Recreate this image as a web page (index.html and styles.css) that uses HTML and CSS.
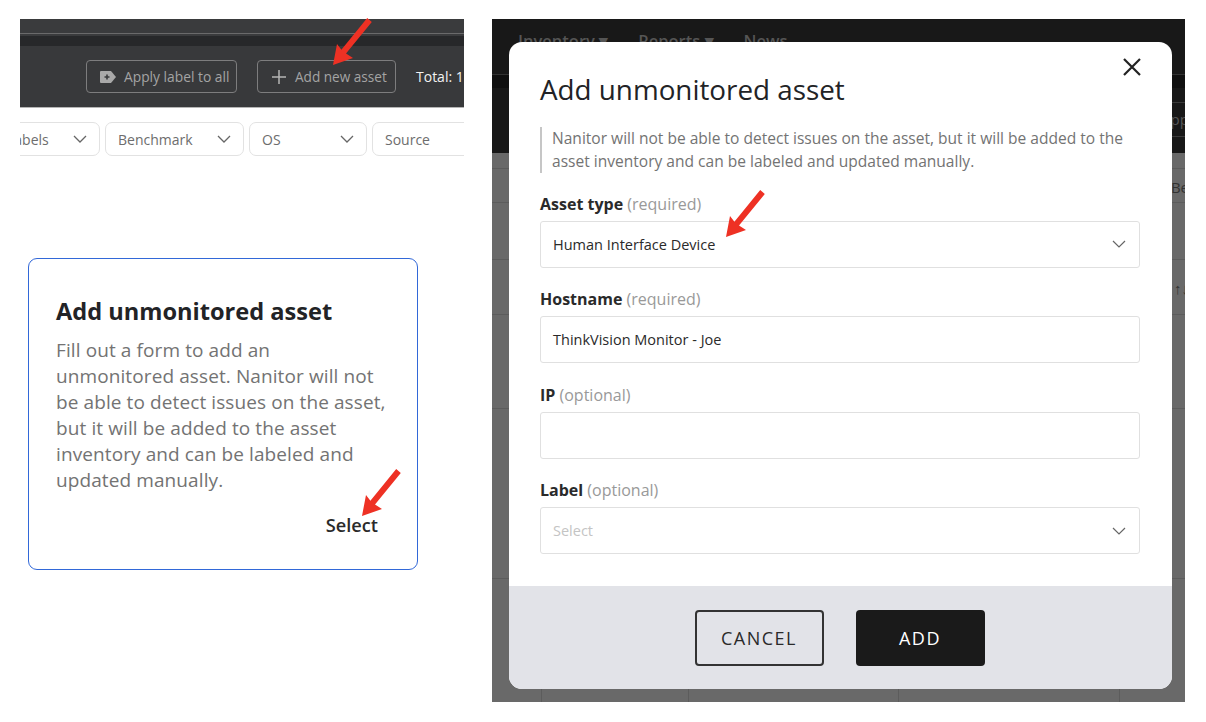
FILE: index.html
```html
<!DOCTYPE html>
<html lang="en">
<head>
  <meta charset="UTF-8">
  <title>Add unmonitored asset</title>
  <link rel="stylesheet" href="styles.css">
</head>
<body>
  <div class="page">
    <div class="left-col">
      <div class="shot-top">
        <div class="bar-strip"></div>
        <div class="bar-dark"></div>
        <div class="toolbar">
          <div class="tool-btn tool-btn-label">
            <svg width="18" height="14" viewBox="0 0 18 14"><path d="M2 1h10l5 6-5 6H2a1 1 0 0 1-1-1V2a1 1 0 0 1 1-1z" fill="#a9a9a9"/><path d="M5.5 7h5M8 4.5v5" stroke="#3a3b3d" stroke-width="1.6"/></svg>
            <span>Apply label to all</span>
          </div>
          <div class="tool-btn tool-btn-add">
            <svg width="14" height="14" viewBox="0 0 14 14"><path d="M7 0v14M0 7h14" stroke="#b5b5b5" stroke-width="1.5"/></svg>
            <span>Add new asset</span>
          </div>
          <span class="total">Total: 1</span>
        </div>
        <div class="filters">
          <div class="filter filter-labels"><span>Labels</span><svg class="chev" width="14" height="8" viewBox="0 0 14 8"><path d="M1 1l6 6 6-6" fill="none" stroke="#666" stroke-width="1.3"/></svg></div>
          <div class="filter filter-bench"><span>Benchmark</span><svg class="chev" width="14" height="8" viewBox="0 0 14 8"><path d="M1 1l6 6 6-6" fill="none" stroke="#666" stroke-width="1.3"/></svg></div>
          <div class="filter filter-os"><span>OS</span><svg class="chev" width="14" height="8" viewBox="0 0 14 8"><path d="M1 1l6 6 6-6" fill="none" stroke="#666" stroke-width="1.3"/></svg></div>
          <div class="filter filter-source"><span>Source</span></div>
        </div>
      </div>

      <div class="card">
        <h3>Add unmonitored asset</h3>
        <p>Fill out a form to add an unmonitored asset. Nanitor will not be able to detect issues on the asset, but it will be added to the asset inventory and can be labeled and updated manually.</p>
        <div class="card-select">Select</div>
      </div>
    </div>

    <div class="shot-right">
      <div class="bg-nav">
        <span>Inventory ▾</span>
        <span>Reports ▾</span>
        <span>News</span>
      </div>
      <div class="bg-sub"></div>
      <div class="bg-bar"><span>Apply</span></div>
      <div class="bg-row bg-row-a"></div>
      <div class="bg-row bg-row-b"><span>Be</span></div>
      <div class="bg-row bg-row-c"></div>
      <div class="bg-row bg-row-d"><span>↑↓</span></div>
      <div class="bg-row bg-row-e"></div>
      <div class="bg-row bg-row-f"></div>
      <div class="bg-cols">
        <i></i><i></i><i></i><i></i>
      </div>

      <div class="modal">
        <svg class="close" width="18" height="18" viewBox="0 0 18 18"><path d="M1 1l16 16M17 1L1 17" stroke="#222" stroke-width="2.2"/></svg>
        <div class="modal-body">
          <h2>Add unmonitored asset</h2>
          <p class="note">Nanitor will not be able to detect issues on the asset, but it will be added to the asset inventory and can be labeled and updated manually.</p>

          <div class="field field-type">
            <label><b>Asset type</b> (required)</label>
            <div class="box">
              <span>Human Interface Device</span>
              <svg width="14" height="8" viewBox="0 0 14 8"><path d="M1 1l6 6 6-6" fill="none" stroke="#666" stroke-width="1.2"/></svg>
            </div>
          </div>
          <div class="field">
            <label><b>Hostname</b> (required)</label>
            <div class="box"><span>ThinkVision Monitor - Joe</span></div>
          </div>
          <div class="field">
            <label><b>IP</b> (optional)</label>
            <div class="box"></div>
          </div>
          <div class="field">
            <label><b>Label</b> (optional)</label>
            <div class="box">
              <span class="placeholder">Select</span>
              <svg width="14" height="8" viewBox="0 0 14 8"><path d="M1 1l6 6 6-6" fill="none" stroke="#666" stroke-width="1.2"/></svg>
            </div>
          </div>
        </div>
        <div class="modal-foot">
          <button class="btn btn-cancel">CANCEL</button>
          <button class="btn btn-add">ADD</button>
        </div>
      </div>
    </div>

    <!-- red arrows drawn over the screenshots -->
    <svg class="arrow arrow-1" width="41" height="52" viewBox="0 0 41 52"><polygon points="1,51 5,30 9.4,35.8 35.2,4 39.8,8 14,39.6 21,44"/></svg>
    <svg class="arrow arrow-2" width="41" height="52" viewBox="0 0 41 52"><polygon points="1,51 5,30 9.4,35.8 35.2,4 39.8,8 14,39.6 21,44"/></svg>
    <svg class="arrow arrow-3" width="41" height="52" viewBox="0 0 41 52"><polygon points="1,51 5,30 9.4,35.8 35.2,4 39.8,8 14,39.6 21,44"/></svg>
  </div>
</body>
</html>
```

FILE: styles.css
```css
html, body {
  margin: 0;
  background-color: #fff;
}

body {
  font-family: "Open Sans", "Noto Sans", sans-serif;
  overflow: hidden;
}

.page {
  position: relative;
  width: 1206px;
  height: 722px;
  padding: 19px 21px 20px 20px;
  box-sizing: border-box;
  display: flex;
  gap: 28px;
}

.left-col {
  width: 444px;
  display: flex;
  flex-direction: column;
}

/* top left screenshot */
.shot-top {
  height: 146px;
  overflow: hidden;
}

.bar-strip {
  height: 14px;
  background-color: #3a3b3d;
  border-bottom: 1px solid #6a6a6b;
}

.bar-dark {
  height: 10px;
  background-color: #27282a;
  border-top: 2px solid #3a3b3d;
}

.toolbar {
  height: 62px;
  padding: 14px 0 0 66px;
  box-sizing: border-box;
  background-color: #38393b;
  border-bottom: 1px solid #b5b5b5;
  display: flex;
  align-items: flex-start;
  white-space: nowrap;
}

.tool-btn {
  height: 33px;
  box-sizing: border-box;
  flex-shrink: 0;
  border: 1px solid #7d7d7e;
  border-radius: 4px;
  display: flex;
  align-items: center;
  color: #a4a4a4;
}

.tool-btn-label {
  width: 151px;
  padding-left: 12px;
  gap: 7px;
  font-size: 13.8px;
}

.tool-btn-add {
  width: 139px;
  margin-left: 20px;
  padding-left: 14px;
  gap: 9px;
  font-size: 13.6px;
}

.total {
  margin-left: 20px;
  line-height: 33px;
  color: #f2f2f2;
  font-size: 14px;
  font-weight: 500;
}

.filters {
  margin-top: 14px;
  margin-left: -50px;
  display: flex;
  gap: 5px;
}

.filter {
  height: 34px;
  box-sizing: border-box;
  flex-shrink: 0;
  border: 1px solid #e2e2e2;
  border-radius: 7px;
  padding: 0 12px;
  display: flex;
  align-items: center;
  justify-content: space-between;
  color: #6d6d6d;
  font-size: 14px;
}

.filter-labels { width: 130px; padding-left: 36px; }
.filter-bench { width: 139px; }
.filter-os { width: 118px; }
.filter-source { width: 110px; }

/* select card */
.card {
  width: 390px;
  height: 312px;
  margin: 93px 0 0 8px;
  padding: 36px 30px 0 27px;
  box-sizing: border-box;
  border: 1px solid #3268d8;
  border-radius: 9px;
}

.card h3 {
  margin: 0 0 9px;
  font-size: 23.6px;
  line-height: 33px;
  font-weight: 700;
  color: #222326;
}

.card p {
  margin: 0;
  font-size: 19px;
  line-height: 26px;
  letter-spacing: 0.1px;
  color: #737373;
}

.card-select {
  margin: 19px 9px 0 0;
  text-align: right;
  font-size: 18.2px;
  line-height: 26px;
  font-weight: 600;
  color: #2a2a2a;
}

/* right screenshot with dimmed page behind the modal */
.shot-right {
  position: relative;
  flex: 1;
  overflow: hidden;
  background-color: #696969;
  display: flex;
  flex-direction: column;
}

.bg-nav {
  height: 56px;
  box-sizing: border-box;
  background-color: #181818;
  border-bottom: 1px solid #333;
  padding: 10px 0 0 26px;
  display: flex;
  gap: 30px;
  color: #555;
  font-size: 16.5px;
  font-weight: 600;
}

.bg-sub {
  height: 13px;
  background-color: #101010;
}

.bg-bar {
  height: 65px;
  box-sizing: border-box;
  flex-shrink: 0;
  background-color: #181818;
  padding: 14px 0 0 668px;
  color: #555;
  font-size: 15px;
}

.bg-bar span {
  display: block;
  height: 35px;
  line-height: 33px;
  border: 1px solid #3a3a3a;
  border-right: 0;
  box-sizing: border-box;
  overflow: hidden;
}

.bg-row {
  flex-shrink: 0;
  box-sizing: border-box;
  border-bottom: 1px solid #5c5c5c;
  text-align: right;
  color: #333;
  font-size: 15px;
}

.bg-row-a { height: 16px; }
.bg-row-b { height: 34px; line-height: 36px; margin-right: -4px; }
.bg-row-c { height: 57px; }
.bg-row-d { height: 55px; line-height: 57px; margin-right: -4px; }
.bg-row-e { height: 94px; }
.bg-row-f { height: 170px; }

.bg-cols {
  flex: 1;
  display: flex;
  padding-left: 49px;
  gap: 146px;
}

.bg-cols i {
  width: 1px;
  background-color: #5c5c5c;
}

.bg-cols i:nth-child(3) { margin-left: 63px; }
.bg-cols i:nth-child(4) { margin-left: 74px; }

.modal {
  position: absolute;
  left: 17px;
  top: 23px;
  width: 663px;
  height: 647px;
  border-radius: 13px;
  background-color: #fff;
  overflow: hidden;
  display: flex;
  flex-direction: column;
}

.close {
  position: absolute;
  right: 31px;
  top: 16px;
}

.modal-body {
  flex: 1;
  padding: 28px 32px 0 31px;
}

.modal-body h2 {
  margin: 0 0 19px;
  font-size: 27.8px;
  line-height: 38px;
  font-weight: 400;
  color: #222326;
}

.note {
  margin: 0 0 18.9px;
  padding-left: 10px;
  border-left: 2px solid #c6c6c6;
  font-size: 15.55px;
  line-height: 23px;
  color: #737373;
}

.field {
  margin-bottom: 19.5px;
}

.field label {
  display: block;
  height: 29px;
  line-height: 24px;
  font-size: 16px;
  color: #999;
}

.field label b {
  font-weight: 700;
  color: #2a2a2a;
}

.box {
  height: 47px;
  box-sizing: border-box;
  border: 1px solid #e0e0e0;
  border-radius: 3px;
  padding: 0 13px 0 12px;
  display: flex;
  align-items: center;
  justify-content: space-between;
  font-size: 14.5px;
  color: #2a2a2a;
}

.placeholder {
  color: #c4c4c4;
}

.modal-foot {
  height: 103px;
  flex-shrink: 0;
  background-color: #e2e3e8;
  display: flex;
  justify-content: center;
  align-items: flex-start;
  padding: 24px 2px 0 0;
  box-sizing: border-box;
  gap: 32px;
}

.btn {
  width: 129px;
  height: 56px;
  box-sizing: border-box;
  border-radius: 4px;
  font-family: inherit;
  font-size: 18px;
  letter-spacing: 1.5px;
}

.btn-cancel {
  background-color: transparent;
  border: 2px solid #333;
  color: #2a2a2a;
}

.btn-add {
  background-color: #1a1a1a;
  border: 0;
  color: #fff;
}

/* annotation arrows */
.arrow {
  position: absolute;
}

.arrow polygon {
  fill: #ee3124;
}

.arrow-1 { left: 332px; top: 14px; }
.arrow-2 { left: 361px; top: 465px; }
.arrow-3 { left: 725px; top: 186px; }
```
